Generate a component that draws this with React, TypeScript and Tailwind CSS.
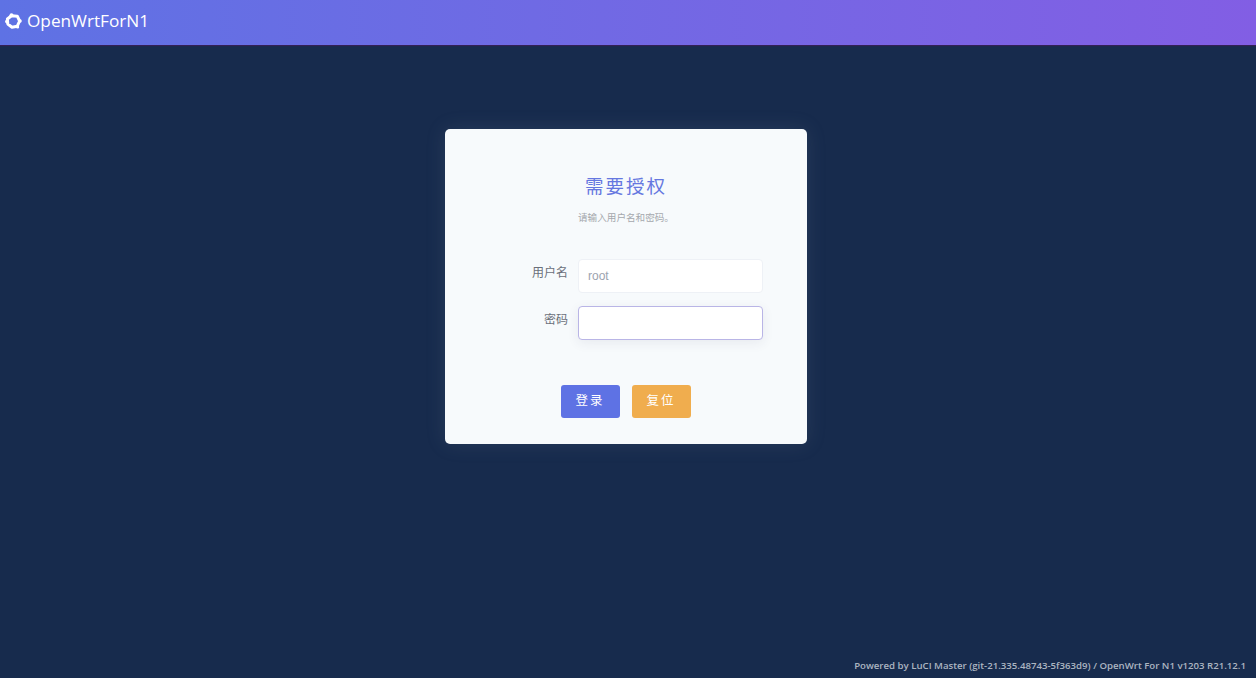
export default function App() {
  return (
    <div className="relative flex h-[678px] flex-col overflow-hidden bg-[#172b4d] font-['Inter','Noto_Sans_CJK_SC',sans-serif]">
      <header className="flex h-[45px] shrink-0 items-center bg-gradient-to-r from-[#5e72e4] to-[#825ee4] pl-[5px] shadow-[0_1px_1px_rgba(60,30,90,0.8)]">
        <svg width="17" height="17" viewBox="0 0 17 17" className="mr-[5px] mt-[-3px]">
          <path d="M6.5 2.8 L12.3 3.2 L14.6 8 L12.3 13.2 L7 14.2 L2.8 11 L2.4 6 Z" fill="none" stroke="#ffffff" strokeWidth="3" strokeLinejoin="round" />
          <circle cx="6.5" cy="2.2" r="2" fill="#ffffff" />
          <circle cx="15" cy="8" r="1.8" fill="#ffffff" />
          <circle cx="1.8" cy="8.6" r="1.8" fill="#ffffff" />
          <circle cx="12.6" cy="14" r="1.6" fill="#ffffff" />
        </svg>
        <span className="font-['Open_Sans',sans-serif] text-[17.2px] leading-none text-white mt-[-3px]">OpenWrtForN1</span>
      </header>
      <main className="flex flex-1 justify-center pt-[83.5px]">
        <div className="mr-[4px] flex h-[315.5px] w-[362px] flex-col items-center rounded-[5px] bg-[#f7fafc] shadow-[0_0_20px_rgba(136,152,170,0.15)]">
          <h2 className="mt-[45px] text-[18.5px] leading-[25px] tracking-[2px] text-[#6577e0]">需要授权</h2>
          <p className="mt-[11px] text-[9.6px] leading-[15px] text-[#a5a8ad]">请输入用户名和密码。</p>
          <div className="mt-[34px] flex w-full flex-col gap-[13px]">
            <div className="flex items-start">
              <label className="mr-[10px] w-[123px] pt-[6px] text-right text-[12px] leading-[15px] text-[#6a6f7a]">用户名</label>
              <div className="flex h-[34px] w-[185px] items-center rounded-[4px] border border-[#eef1f6] bg-white pl-[9px] font-['Liberation_Sans',sans-serif] text-[12px] text-[#9ca3af]">root</div>
            </div>
            <div className="flex items-start">
              <label className="mr-[10px] w-[123px] pt-[6px] text-right text-[12px] leading-[15px] text-[#6a6f7a]">密码</label>
              <div className="h-[34px] w-[185px] rounded-[4px] border border-[#b9b5e6] bg-white shadow-[0_3px_12px_rgba(50,50,93,0.08)]" />
            </div>
          </div>
          <div className="mt-[45px] flex gap-[12px] pr-[1px]">
            <button className="h-[33px] w-[59px] rounded-[3px] bg-[#5e72e4] pt-[1px] text-[12.5px] tracking-[2px] text-white">登录</button>
            <button className="h-[33px] w-[59px] rounded-[3px] bg-[#f0ad4e] pt-[1px] text-[12.5px] tracking-[2px] text-white">复位</button>
          </div>
        </div>
      </main>
      <footer className="absolute bottom-[6px] right-[10px] font-['Open_Sans',sans-serif] text-[9.65px] font-semibold leading-[13px] text-[#acb5c1]">
        Powered by LuCI Master (git-21.335.48743-5f363d9) / OpenWrt For N1 v1203 R21.12.1
      </footer>
    </div>
  );
}
